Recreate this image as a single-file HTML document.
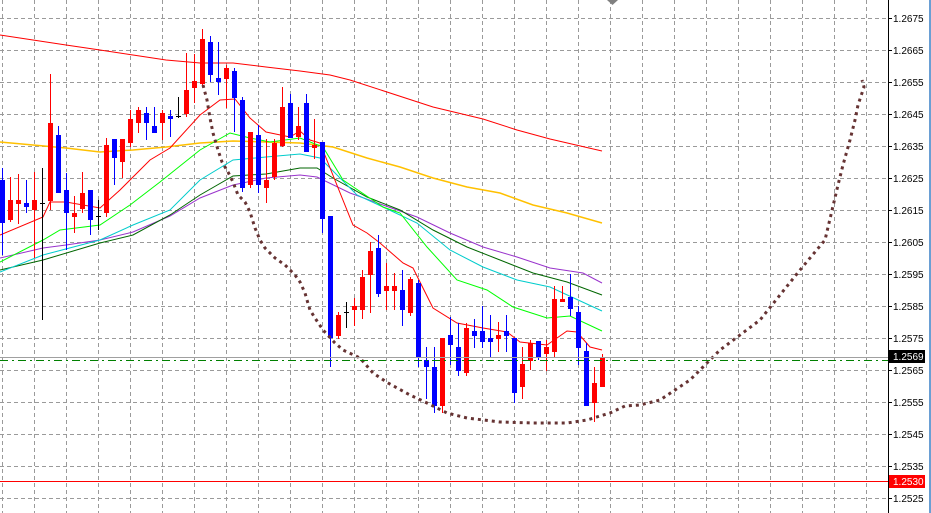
<!DOCTYPE html>
<html><head><meta charset="utf-8"><style>
html,body{margin:0;padding:0;background:#fff;width:931px;height:513px;overflow:hidden}
svg{display:block}
text{font-family:"Liberation Sans",sans-serif;font-size:10px}
</style></head><body>
<svg id="s" width="931" height="513" xmlns="http://www.w3.org/2000/svg">
<rect width="931" height="513" fill="#fff"/>
<g id="grid" stroke="#9a9a9a" stroke-width="1" stroke-dasharray="4 3"></g>
<polygon points="607,0 618,0 612.5,5" fill="#808080"/>
<g id="ma" fill="none" stroke-width="1">
<polyline stroke="#ff0000" points="0,35 33,40 66,45 100,50 133,55 166,60 200,63 233,63 266,67 300,71 330,75 350,80 433,107 483,119 517,130 550,139 602,151"/>
<polyline stroke="#ffc000" stroke-width="1.5" points="0,142 33,145 66,148 100,152 133,150 166,147 200,143 233,141 266,142 300,143 333,147 367,158 400,167 433,178 467,187 500,193 533,205 567,213 602,223"/>
<polyline stroke="#9933cc" points="0,258 43,248 66,245 100,240 133,232 170,216 200,198 233,185 266,178 300,175 317,177 350,193 383,205 417,217 450,233 483,247 517,257 550,268 583,273 602,283"/>
<polyline stroke="#006600" points="0,270 43,260 100,243 133,235 170,215 200,195 233,176 266,174 300,168 317,168 333,178 367,197 400,210 433,230 467,247 500,260 533,273 567,282 602,295"/>
<polyline stroke="#00cccc" points="0,272 43,255 100,240 133,225 170,210 200,180 233,160 266,157 300,154 320,158 357,195 383,207 417,223 450,250 483,267 517,280 550,287 602,311"/>
<polyline stroke="#00ff00" points="0,262 43,240 60,230 100,225 130,205 160,182 200,150 230,133 250,138 270,142 300,138 323,147 343,180 383,207 400,213 427,247 457,280 487,290 513,307 547,318 570,316 602,331"/>
<polyline stroke="#ff0000" points="0,235 43,217 50,202 66,202 100,208 120,190 150,160 170,148 200,115 220,100 235,99 250,118 266,132 290,137 300,131 310,140 320,143 353,225 367,233 380,243 403,263 413,268 433,308 457,323 483,328 507,332 520,342 547,345 567,331 577,332 590,347 602,350"/>
</g>
<g id="c"></g>
<path fill="none" stroke="#663333" stroke-width="3" stroke-dasharray="3 4" d="M203,85 L207,100 210,118 213,133 218,150 222,162 228,172 233,182 238,195 245,202 250,212 255,228 260,240 265,248 275,258 285,265 295,275 300,282 305,293 307,300 310,310 315,318 323,330 335,343 343,350 360,358 373,373 388,383 410,395 427,403 447,413 467,418 500,422 533,423 567,423 587,420 610,413 625,406 640,405 660,400 690,380 720,350 760,320 800,270 825,240 838,185 843,165 850,140 855,120 858,105 864,87 862,80"/>
<rect x="0" y="357" width="888" height="1" fill="#a0a0a0"/>
<line x1="0" y1="360.5" x2="888" y2="360.5" stroke="#008000" stroke-dasharray="8 4 2 4"/>
<rect x="0" y="481" width="888" height="1" fill="#ff0000"/>
<rect x="889" y="0" width="40" height="513" fill="#fff"/>
<line x1="888.5" y1="0" x2="888.5" y2="513" stroke="#000"/>
<rect x="929" y="0" width="2" height="513" fill="#6a9fd4"/>
<g id="ax" fill="#000"></g>
<rect x="889" y="350" width="36" height="13" fill="#000"/>
<text x="893" y="360" fill="#fff">1.2569</text>
<rect x="889" y="475" width="36" height="13" fill="#ff0000"/>
<text x="893" y="485" fill="#fff">1.2530</text>
<g>
<text x="893" y="22">1.2675</text><text x="893" y="54">1.2665</text><text x="893" y="86">1.2655</text><text x="893" y="118">1.2645</text><text x="893" y="150">1.2635</text><text x="893" y="182">1.2625</text><text x="893" y="214">1.2615</text><text x="893" y="246">1.2605</text><text x="893" y="278">1.2595</text><text x="893" y="310">1.2585</text><text x="893" y="342">1.2575</text><text x="893" y="374">1.2565</text><text x="893" y="406">1.2555</text><text x="893" y="438">1.2545</text><text x="893" y="470">1.2535</text><text x="893" y="502">1.2525</text>
</g>
</svg>
<script>
var NS="http://www.w3.org/2000/svg";
function el(p,t,a){var e=document.createElementNS(NS,t);for(var k in a)e.setAttribute(k,a[k]);p.appendChild(e);return e;}
var g=document.getElementById('grid');
for(var x=2;x<888;x+=32)el(g,'line',{x1:x+.5,y1:0,x2:x+.5,y2:513});
for(var y=18;y<513;y+=32){el(g,'line',{x1:0,y1:y+.5,x2:888,y2:y+.5});el(document.getElementById('ax'),'line',{x1:888,y1:y+.5,x2:892,y2:y+.5,stroke:'#000'});}
var d=`2 b 180 223 168 255
10 r 200 220 177 222
18 r 200 204 174 224
26 b 203 207 180 213
34 r 200 210 172 258
42 k 203 203 168 320
50 r 123 201 74 210
58 b 135 193 126 193
66 b 190 213 173 250
74 r 213 217 196 233
82 r 193 209 172 213
90 b 190 220 190 235
98 k 216 216 200 230
106 r 145 213 138 217
114 b 139 158 139 185
122 r 139 162 139 178
130 r 119 143 110 147
138 r 110 123 107 133
146 b 113 123 107 140
154 b 126 133 107 133
162 r 113 123 110 140
170 b 116 119 110 137
178 k 116 116 97 118
186 r 90 114 53 117
194 r 81 88 54 103
202 r 39 84 29 87
210 b 42 75 36 82
218 b 78 82 42 95
226 r 68 79 65 108
234 b 71 98 68 132
242 b 100 188 97 192
250 r 132 185 132 188
258 b 135 185 125 193
266 r 180 188 139 203
274 r 143 177 139 180
282 r 107 146 87 147
290 b 103 138 94 138
298 r 126 137 107 140
306 b 103 152 94 152
314 r 145 148 119 159
322 b 142 219 142 233
330 b 216 338 216 367
338 r 315 336 312 339
346 k 312 312 302 328
354 r 306 310 298 326
362 r 277 310 270 319
370 r 251 275 242 313
378 b 248 294 235 297
386 r 286 291 263 310
394 r 286 291 273 310
402 b 290 310 270 326
410 r 279 313 277 316
418 b 283 358 280 367
426 b 360 367 347 399
434 b 367 406 347 413
442 r 338 406 338 413
450 b 335 345 317 365
458 b 347 371 323 376
466 r 328 373 323 376
474 b 331 336 319 348
482 b 331 342 306 348
490 b 338 342 315 357
498 r 335 339 322 352
506 b 331 336 315 352
514 b 338 393 338 403
522 r 364 387 347 399
530 r 343 361 340 370
538 b 341 357 341 360
546 r 347 354 340 371
554 r 299 352 286 357
562 r 299 302 286 302
570 b 297 309 274 316
578 b 312 348 306 365
586 b 351 406 343 406
594 r 383 403 367 422
602 r 357 387 354 387`;
var c=document.getElementById('c');
d.split('\n').forEach(function(l){var p=l.trim().split(/\s+/);var x=+p[0],col={r:'#ff0000',b:'#0000ff',k:'#000'}[p[1]];var bt=+p[2],bb=+p[3],wt=+p[4],wb=+p[5];
el(c,'line',{x1:x+.5,y1:wt,x2:x+.5,y2:wb,stroke:col});
if(p[1]=='k')el(c,'line',{x1:x-2,y1:bt+.5,x2:x+3,y2:bt+.5,stroke:col});
else el(c,'rect',{x:x-2,y:bt,width:5,height:Math.max(bb-bt,2),fill:col});});
</script>
</body></html>
